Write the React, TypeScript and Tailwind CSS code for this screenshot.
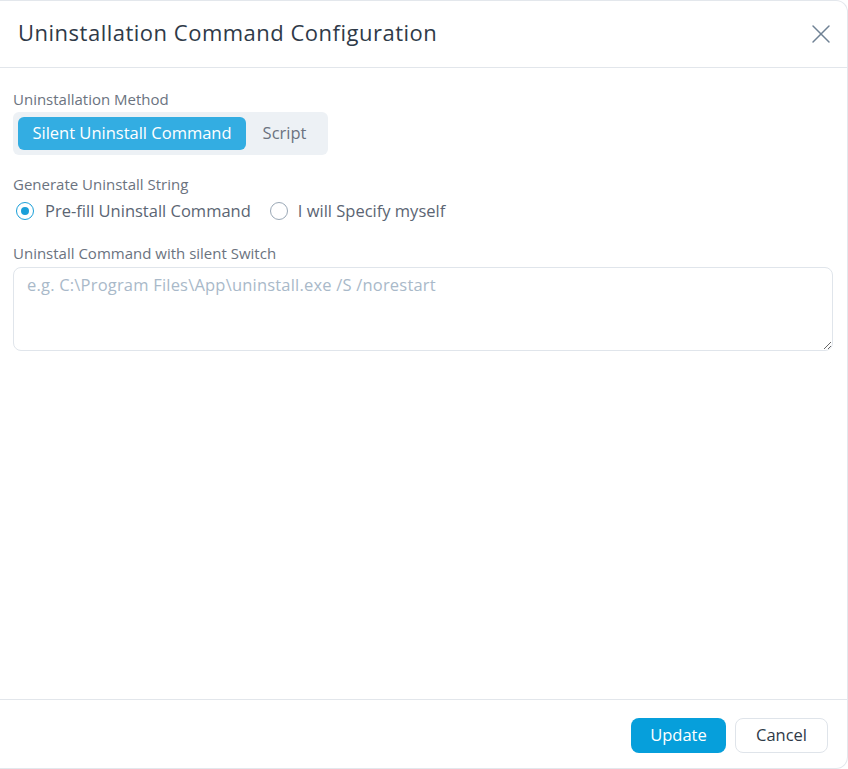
import React, { useState } from 'react';
import { X } from 'lucide-react';

const font = { fontFamily: '"Open Sans", "Noto Sans", sans-serif' };

const App: React.FC = () => {
  const [method, setMethod] = useState<'silent' | 'script'>('silent');
  const [mode, setMode] = useState<'prefill' | 'manual'>('prefill');

  return (
    <div className="h-[769px] w-[848px] bg-white" style={font}>
      <div className="flex h-full flex-col rounded-r-xl border-r border-y border-[#e3e7ec] bg-white">
        <header className="flex h-[67px] shrink-0 items-center justify-between border-b border-[#e2e6eb] pl-[18px] pr-[10px]">
          <h2 className="mb-[3px] text-[22px] font-medium tracking-[0.5px] text-[#2f3a48]">
            Uninstallation Command Configuration
          </h2>
          <button className="text-[#6f8194]">
            <X className="h-[32px] w-[32px]" strokeWidth={1.1} />
          </button>
        </header>

        <main className="flex-1 pl-[13px] pr-[14px] pt-[21px]">
          <div className="text-[15px] leading-[20px] text-[#6b7380]">Uninstallation Method</div>
          <div className="mt-[3px] inline-flex h-[43px] items-center rounded-md bg-[#edf1f5] px-[5px]">
            <button
              onClick={() => setMethod('silent')}
              className={
                method === 'silent'
                  ? 'h-[33px] w-[228px] rounded-md bg-[#33ade2] text-[16.5px] font-medium text-white'
                  : 'h-[33px] w-[228px] rounded-md text-[16.5px] text-[#6b7380]'
              }
            >
              Silent Uninstall Command
            </button>
            <button
              onClick={() => setMethod('script')}
              className={
                method === 'script'
                  ? 'h-[33px] w-[77px] rounded-md bg-[#33ade2] text-[16.5px] font-medium text-white'
                  : 'h-[33px] w-[77px] rounded-md text-[16.5px] text-[#6b7380]'
              }
            >
              Script
            </button>
          </div>

          <div className="mt-[19px] text-[15px] leading-[20px] text-[#6b7380]">Generate Uninstall String</div>
          <div className="mt-[5px] flex items-center gap-[19px] pl-[3px]">
            <label className="flex cursor-pointer items-center gap-[11px]" onClick={() => setMode('prefill')}>
              <span
                className={
                  mode === 'prefill'
                    ? 'flex h-[18px] w-[18px] items-center justify-center rounded-full border border-[#1a9fd9]'
                    : 'flex h-[18px] w-[18px] items-center justify-center rounded-full border border-[#9aa8b6]'
                }
              >
                {mode === 'prefill' && <span className="h-[8px] w-[8px] rounded-full bg-[#1a9fd9]" />}
              </span>
              <span className="text-[16.5px] leading-[24px] text-[#5b6573]">Pre-fill Uninstall Command</span>
            </label>
            <label className="flex cursor-pointer items-center gap-[10px]" onClick={() => setMode('manual')}>
              <span
                className={
                  mode === 'manual'
                    ? 'flex h-[18px] w-[18px] items-center justify-center rounded-full border border-[#1a9fd9]'
                    : 'flex h-[18px] w-[18px] items-center justify-center rounded-full border border-[#9aa8b6]'
                }
              >
                {mode === 'manual' && <span className="h-[8px] w-[8px] rounded-full bg-[#1a9fd9]" />}
              </span>
              <span className="text-[16.5px] leading-[24px] text-[#5b6573]">I will Specify myself</span>
            </label>
          </div>

          <div className="mt-[20px] text-[15px] leading-[20px] text-[#6b7380]">Uninstall Command with silent Switch</div>
          <textarea
            className="mt-[4px] block h-[84px] w-full rounded-lg border border-[#e0e5eb] px-[13px] py-[5px] text-[16.5px] tracking-[0.2px] text-[#374151] outline-none placeholder:text-[#a9b9c9]"
            placeholder="e.g. C:\Program Files\App\uninstall.exe /S /norestart"
          />
        </main>

        <footer className="flex h-[69px] shrink-0 items-start justify-end gap-[9px] border-t border-[#e2e6eb] pr-[19px] pt-[18px]">
          <button className="h-[35px] w-[95px] rounded-lg bg-[#069fdb] text-[16.5px] text-white">Update</button>
          <button className="h-[35px] w-[93px] rounded-lg border border-[#dfe4ea] bg-white text-[16.5px] text-[#2f3a48]">
            Cancel
          </button>
        </footer>
      </div>
    </div>
  );
};

export default App;
